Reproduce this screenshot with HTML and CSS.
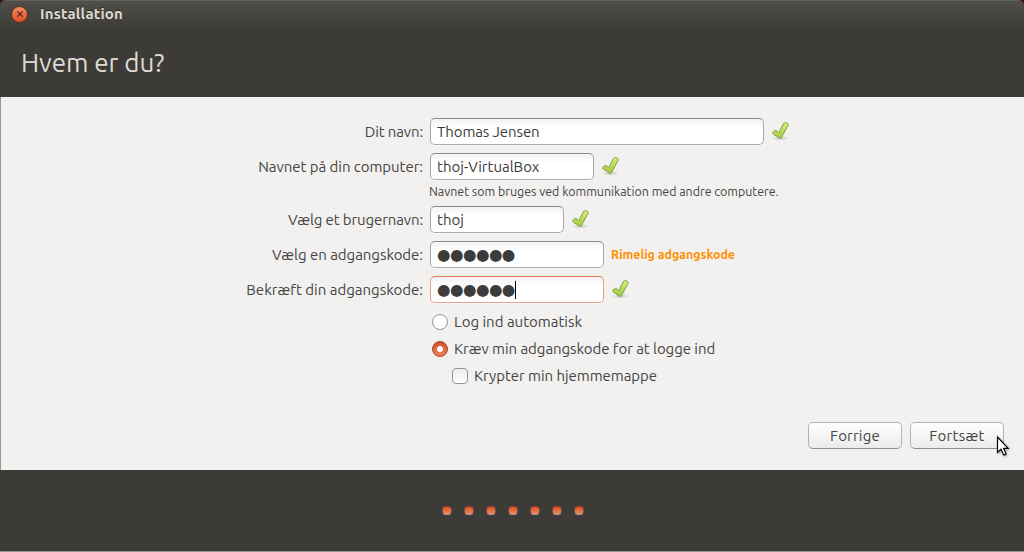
FILE: index.html
```html
<!DOCTYPE html>
<html lang="da">
<head>
<meta charset="utf-8">
<title>Installation</title>
<link rel="stylesheet" href="styles.css">
</head>
<body>
<svg class="defs" width="0" height="0" aria-hidden="true">
  <defs>
    <linearGradient id="leaf" x1="0" y1="0" x2="0" y2="1"><stop offset="0" stop-color="#dcee78"/><stop offset="1" stop-color="#a2c840"/></linearGradient>
    <radialGradient id="shade"><stop offset="0" stop-color="#000" stop-opacity=".2"/><stop offset="1" stop-color="#000" stop-opacity="0"/></radialGradient>
    <symbol id="check" viewBox="0 0 20 20">
      <ellipse cx="9.5" cy="17.3" rx="9" ry="2.3" fill="url(#shade)"/>
      <path d="M2.3 10.8 4.9 9.3 7.7 11.7 12.7 2.2Q13.3 1.2 14.3 1.5L16.8 2.6Q17.6 3.1 17.2 4L10.5 16.5Q9.5 17.9 8.2 17L2.2 12.9Q1.3 11.8 2.3 10.8Z" fill="url(#leaf)" stroke="#74a548" stroke-width="1" stroke-linejoin="round"/>
    </symbol>
  </defs>
</svg>
<div class="window">
  <header class="header">
    <div class="titlebar">
      <span class="close"><svg width="8" height="8" viewBox="0 0 8 8"><path d="M1.3 1.3 6.7 6.7M6.7 1.3 1.3 6.7" stroke="#45251b" stroke-width="1.1"/></svg></span>
      <span class="title">Installation</span>
    </div>
    <h1 class="heading">Hvem er du?</h1>
  </header>
  <main class="page">
    <form class="form">
      <div class="row"><label class="label l-name">Dit navn:</label><span class="field w-name"><span class="v-name">Thomas Jensen</span></span><svg class="tick"><use href="#check"/></svg></div>
      <div class="row"><label class="label l-host">Navnet på din computer:</label><span class="field w-host"><span>thoj-VirtualBox</span></span><svg class="tick"><use href="#check"/></svg></div>
      <p class="hint">Navnet som bruges ved kommunikation med andre computere.</p>
      <div class="row"><label class="label l-user">Vælg et brugernavn:</label><span class="field w-user"><span>thoj</span></span><svg class="tick"><use href="#check"/></svg></div>
      <div class="row"><label class="label l-host">Vælg en adgangskode:</label><span class="field w-pass"><span class="bullets">●●●●●●</span></span><span class="strength">Rimelig adgangskode</span></div>
      <div class="row"><label class="label">Bekræft din adgangskode:</label><span class="field w-pass focused"><span class="bullets">●●●●●●</span><span class="caret"></span></span><svg class="tick"><use href="#check"/></svg></div>
      <div class="options">
        <label class="option"><span class="radio"></span><span>Log ind automatisk</span></label>
        <label class="option"><span class="radio selected"></span><span class="o-require">Kræv min adgangskode for at logge ind</span></label>
        <label class="option nested"><span class="checkbox"></span><span class="o-crypt">Krypter min hjemmemappe</span></label>
      </div>
    </form>
    <div class="actions">
      <span class="button"><span class="b-back">Forrige</span></span>
      <span class="button"><span class="b-next">Fortsæt</span></span>
    </div>
  </main>
  <footer class="footer"><i class="dot"></i><i class="dot"></i><i class="dot"></i><i class="dot"></i><i class="dot"></i><i class="dot"></i><i class="dot"></i></footer>
  <svg class="pointer" width="14" height="22" viewBox="0 0 14 22"><path d="M1.5 2V17.5L5 14.3 7.5 19.8Q9 20.1 10 18.8L7.6 13.3H12.2Z" fill="#fff" stroke="#000" stroke-width="1.2"/></svg>
</div>
</body>
</html>
```
FILE: styles.css
```css
* { box-sizing: border-box; }
body { margin: 0; background: #3c0d24; font: 15px/20px "Ubuntu", "Noto Sans", sans-serif; color: #454545; }
.defs { position: absolute; }
.window { position: relative; width: 1024px; height: 552px; display: flex; flex-direction: column; overflow: hidden; border-radius: 6px 6px 0 0; border-bottom: 1px solid #98958f; background: #3c3b37; }
.header { height: 97px; flex: none; background: linear-gradient(#504f4a 0, #3c3b37 28px); border-top: 1px solid #65635d; }
.titlebar { height: 27px; display: flex; align-items: center; padding: 0 0 1px 11px; }
.close { width: 17px; height: 17px; border-radius: 50%; display: flex; align-items: center; justify-content: center; background: linear-gradient(#f58c6a, #df4c1d); border: 1px solid #54301f; }
.title { margin-left: 12px; font-weight: 700; font-size: 15px; letter-spacing: .2px; color: #dfdbd2; text-shadow: 0 -1px #292825; }
.heading { margin: 16px 0 0 21px; font-size: 26px; line-height: 38px; font-weight: 400; letter-spacing: -.05px; color: #dfdbd2; white-space: nowrap; }
.page { height: 373px; flex: none; background: #f2f1f0; border-left: 1px solid #9b9993; display: flex; flex-direction: column; }
.form { display: flex; flex-direction: column; padding: 21px 0 0; }
.row { height: 27px; margin-bottom: 8px; display: flex; align-items: center; }
.label { width: 422px; margin-right: 7px; text-align: right; white-space: nowrap; }
.l-name, .l-user { letter-spacing: -.12px; }
.l-host { letter-spacing: -.04px; }
.field > span, .option > span, .button > span, .hint, .strength { white-space: nowrap; }
.field { height: 27px; display: flex; align-items: center; padding-left: 6px; border: 1px solid #a9a9a7; border-top-color: #8b8b89; border-radius: 5px; background: linear-gradient(#f3f3f3, #fff 9px); color: #3c3c3c; box-shadow: 0 1px #f9f9f8; }
.focused { border-color: #e8a189; border-top-color: #df7853; }
.w-name { width: 334px; }
.w-host { width: 164px; }
.w-user { width: 134px; }
.w-pass { width: 174px; }
.v-name { letter-spacing: -.1px; }
.bullets { font: 15.5px/20px "DejaVu Sans", sans-serif; letter-spacing: -.55px; }
.caret { width: 1px; height: 18px; background: #000; }
.tick { width: 20px; height: 20px; margin: -1px 0 0 7px; }
.hint { margin: -6px 0 5px 428px; font-size: 12.4px; line-height: 19px; }
.strength { margin-left: 7px; font-size: 12.4px; line-height: 18px; padding-bottom: 1px; font-weight: 700; color: #ff9000; }
.options { display: flex; flex-direction: column; padding: 0 0 0 431px; margin-top: -3px; }
.option { height: 27px; display: flex; align-items: center; gap: 6px; }
.o-require { letter-spacing: -.06px; }
.o-crypt { letter-spacing: -.05px; }
.nested { padding-left: 20px; }
.radio, .checkbox { width: 16px; height: 16px; flex: none; border: 1px solid #969694; background: #fff; border-radius: 50%; }
.selected { border-color: #a9441f; background: radial-gradient(circle, #fff 2.6px, transparent 3.4px), linear-gradient(#cc5328, #ec8560); }
.checkbox { border-radius: 4px; background: linear-gradient(#eee, #fff); }
.actions { display: flex; justify-content: flex-end; gap: 8px; padding-right: 20px; margin-top: 33px; }
.button { width: 94px; height: 27px; display: flex; align-items: center; justify-content: center; border: 1px solid #b4b3b1; border-bottom-color: #8f8e8c; border-radius: 5px; background: linear-gradient(#fff, #ebebea); }
.b-back { letter-spacing: .18px; }
.b-next { letter-spacing: .28px; }
.footer { flex: 1; display: flex; align-items: center; justify-content: center; gap: 12px; padding-left: 2px; }
.dot { width: 10px; height: 9px; border-radius: 4px; border: 1px solid #68584f; border-top-color: #9c3b19; border-bottom-color: #a59a94; background: linear-gradient(#d9501f, #f08a62); }
.pointer { position: absolute; left: 996px; top: 435px; filter: drop-shadow(1px 1px 1px rgba(0,0,0,.3)); }
```
